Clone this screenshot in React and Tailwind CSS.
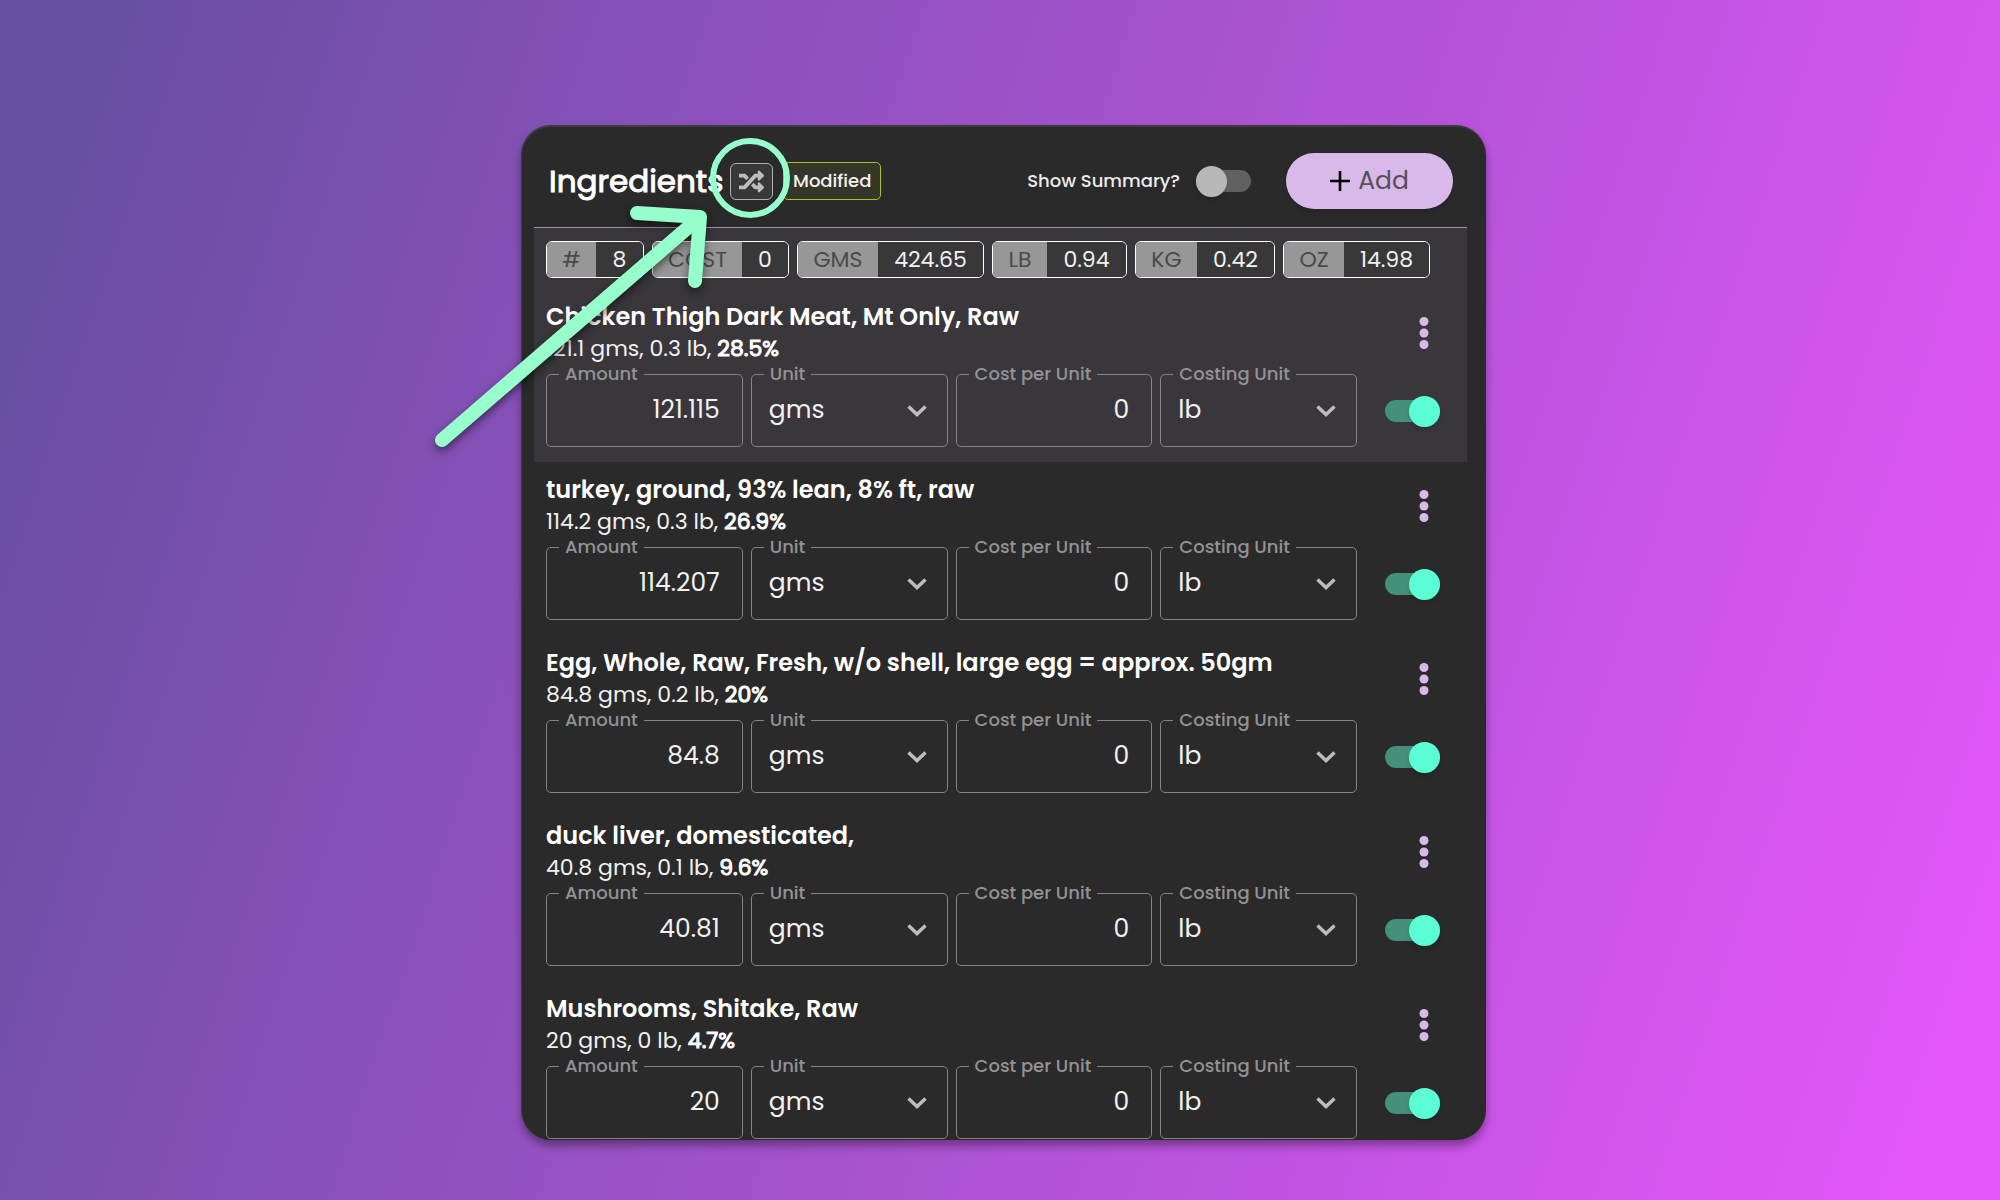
import React, { useState } from 'react';
import { FaRandom } from 'react-icons/fa';

const TOTALS = [
  { label: '#', value: '8', labelWidth: 'w-[49px]', valueWidth: 'w-[47px]' },
  { label: 'COST', value: '0', labelWidth: 'w-[89px]', valueWidth: 'w-[46px]' },
  { label: 'GMS', value: '424.65', labelWidth: 'w-[80px]', valueWidth: 'w-[105px]' },
  { label: 'LB', value: '0.94', labelWidth: 'w-[54px]', valueWidth: 'w-[79px]' },
  { label: 'KG', value: '0.42', labelWidth: 'w-[61px]', valueWidth: 'w-[77px]' },
  { label: 'OZ', value: '14.98', labelWidth: 'w-[60px]', valueWidth: 'w-[85px]' },
];

const INGREDIENTS = [
  { id: 1, name: 'Chicken Thigh Dark Meat, Mt Only, Raw', weight: '121.1 gms, 0.3 lb,', share: '28.5%', amount: '121.115' },
  { id: 2, name: 'turkey, ground, 93% lean, 8% ft, raw', weight: '114.2 gms, 0.3 lb,', share: '26.9%', amount: '114.207' },
  { id: 3, name: 'Egg, Whole, Raw, Fresh, w/o shell, large egg = approx. 50gm', weight: '84.8 gms, 0.2 lb,', share: '20%', amount: '84.8' },
  { id: 4, name: 'duck liver, domesticated,', weight: '40.8 gms, 0.1 lb,', share: '9.6%', amount: '40.81' },
  { id: 5, name: 'Mushrooms, Shitake, Raw', weight: '20 gms, 0 lb,', share: '4.7%', amount: '20' },
];

function Switch({ id, label, checked, onChange }) {
  return (
    <span className="relative flex h-8 w-[55px] shrink-0 items-center">
      <input
        id={id}
        type="checkbox"
        role="switch"
        aria-label={label}
        checked={checked}
        onChange={(e) => onChange(e.target.checked)}
        className="peer h-[22px] w-full cursor-pointer appearance-none rounded-full bg-[#616161] checked:bg-[#459078]"
      />
      <span className="pointer-events-none absolute left-0 h-[31px] w-[31px] rounded-full bg-[#b8b8b8] shadow-md peer-checked:left-auto peer-checked:right-0 peer-checked:bg-[#5cffd5]" />
    </span>
  );
}

// Outlined field, the legend cuts the top border
function Field({ id, label, children }) {
  return (
    <fieldset className="relative h-[82px] min-w-0 rounded-[5px] border border-[#858387]">
      <legend className="ml-3 h-[18px] px-[6px] text-lg leading-[18px] font-medium text-[#939295]">
        <label htmlFor={id}>{label}</label>
      </legend>
      {children}
    </fieldset>
  );
}

function NumberField({ id, label, defaultValue }) {
  return (
    <Field id={id} label={label}>
      <input
        id={id}
        type="text"
        inputMode="decimal"
        defaultValue={defaultValue}
        className="block h-[54px] w-full bg-transparent pr-[22px] text-right text-[25px] text-[#f1f1f1] outline-none"
      />
    </Field>
  );
}

function SelectField({ id, label, defaultValue }) {
  return (
    <Field id={id} label={label}>
      <select
        id={id}
        defaultValue={defaultValue}
        className="block h-[54px] w-full appearance-none bg-transparent pl-[17px] text-[25px] text-[#f1f1f1] outline-none"
      >
        <option value="gms">gms</option>
        <option value="lb">lb</option>
        <option value="kg">kg</option>
        <option value="oz">oz</option>
      </select>
      <svg
        className="pointer-events-none absolute right-5 top-[22px] h-3 w-5"
        viewBox="0 0 20 12"
        fill="none"
        stroke="#bdbcbe"
        strokeWidth="3.5"
      >
        <path d="M1.5 1.5 10 9.5 18.5 1.5" />
      </svg>
    </Field>
  );
}

function IngredientRow({ item }) {
  const [active, setActive] = useState(true);

  return (
    <div className="flex gap-7 pl-3 pr-[27px] pt-3">
      <div className="min-w-0 flex-1">
        <h2 className="text-2xl leading-8 font-semibold text-white">{item.name}</h2>
        <p className="text-[22px] leading-8 text-[#f1f1f1]">
          {item.weight} <b className="font-normal text-white [-webkit-text-stroke:1px]">{item.share}</b>
        </p>
        <div className="grid grid-cols-4 gap-2">
          <NumberField id={`amount-${item.id}`} label="Amount" defaultValue={item.amount} />
          <SelectField id={`unit-${item.id}`} label="Unit" defaultValue="gms" />
          <NumberField id={`cost-${item.id}`} label="Cost per Unit" defaultValue="0" />
          <SelectField id={`costing-unit-${item.id}`} label="Costing Unit" defaultValue="lb" />
        </div>
      </div>

      <div className="flex flex-col items-center justify-between pb-5 pt-3">
        <button type="button" aria-label="More options" className="ml-[22px] px-2 py-1">
          <svg className="h-8 w-[10px]" viewBox="0 0 10 32" fill="#d8b9ea">
            <circle cx="5" cy="4.5" r="4.5" />
            <circle cx="5" cy="16" r="4.5" />
            <circle cx="5" cy="27.5" r="4.5" />
          </svg>
        </button>
        <Switch id={`active-${item.id}`} label="Active" checked={active} onChange={setActive} />
      </div>
    </div>
  );
}

export default function App() {
  const [showSummary, setShowSummary] = useState(false);
  const [first, ...rest] = INGREDIENTS;

  return (
    <main className="min-h-screen bg-[linear-gradient(108deg,#684fa2_5%,#e556fb_97%)] pb-[60px] pl-[7px] pt-[125px] font-['Poppins','Inter',sans-serif]">
      <div className="relative mx-auto w-full max-w-[965px]">
        <section className="overflow-hidden rounded-[30px] border-l border-t-2 border-[#3c3c3c] bg-[#2a2a2a] pb-px pl-3 pr-[19px] shadow-[0_6px_8px_rgba(0,0,0,0.35)]">
          <header className="flex h-[101px] items-center border-b border-[#98979a] pb-[17px] pl-[15px] pr-[14px] pt-[25px]">
            <h1 className="w-[181px] text-[31px] leading-10 font-normal text-white [-webkit-text-stroke:1px]">Ingredients</h1>
            <button
              type="button"
              aria-label="Shuffle"
              className="flex h-[37px] w-[43px] items-center justify-center rounded-md border border-[#b0b0b0] bg-[#383838] text-[#bdbdbd]"
            >
              <FaRandom size={25} />
            </button>
            <span className="ml-[10px] rounded-[5px] border border-[#aebf21] bg-[#35362a] px-[9px] text-lg leading-9 font-medium text-[#f1f1f1]">
              Modified
            </span>

            <label htmlFor="show-summary" className="ml-auto mr-4 text-lg font-medium text-[#ececec]">
              Show Summary?
            </label>
            <Switch id="show-summary" label="Show Summary?" checked={showSummary} onChange={setShowSummary} />
            <button
              type="button"
              className="ml-[35px] flex h-14 w-[167px] items-center justify-center gap-2 rounded-full bg-[#d8b9ea] text-[25px] text-[#555059] shadow-md"
            >
              <svg className="h-5 w-5" viewBox="0 0 20 20" stroke="#000" strokeWidth="2.6">
                <path d="M10 0v20M0 10h20" />
              </svg>
              Add
            </button>
          </header>

          <div className="bg-[#3a373c] pb-[15px] pt-[13px]">
            <dl className="flex gap-2 pl-3">
              {TOTALS.map((total) => (
                <div key={total.label} className="flex h-[37px] overflow-hidden rounded-md border border-white text-[22px] leading-[35px]">
                  <dt className={`${total.labelWidth} bg-[#979797] text-center text-[#4a4a4a]`}>{total.label}</dt>
                  <dd className={`${total.valueWidth} bg-[#383838] text-center text-[#f1f1f1]`}>{total.value}</dd>
                </div>
              ))}
            </dl>
            <div className="pt-[11px]">
              <IngredientRow item={first} />
            </div>
          </div>

          <div className="flex flex-col gap-[15px]">
            {rest.map((item) => (
              <IngredientRow key={item.id} item={item} />
            ))}
          </div>
        </section>

        {/* Callout: ring round the shuffle button and the arrow to it */}
        <svg className="pointer-events-none absolute left-0 top-0 h-full w-full overflow-visible" fill="none" stroke="#96ffcb">
          <circle cx="229" cy="53" r="37" strokeWidth="6" />
          <path
            className="drop-shadow-[0_4px_4px_rgba(0,0,0,0.5)]"
            d="M-79 315 178 93M116 88 179 92 174 156"
            strokeWidth="14"
            strokeLinecap="round"
            strokeLinejoin="round"
          />
        </svg>
      </div>
    </main>
  );
}
